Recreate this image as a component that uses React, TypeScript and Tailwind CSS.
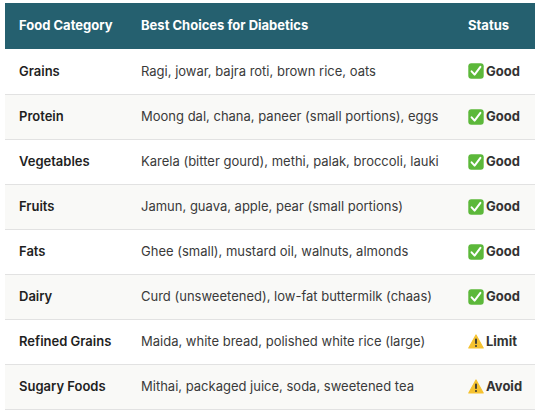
const rows: { cat: string; choices: string; status: "good" | "limit" | "avoid" }[] = [
  { cat: "Grains", choices: "Ragi, jowar, bajra roti, brown rice, oats", status: "good" },
  { cat: "Protein", choices: "Moong dal, chana, paneer (small portions), eggs", status: "good" },
  { cat: "Vegetables", choices: "Karela (bitter gourd), methi, palak, broccoli, lauki", status: "good" },
  { cat: "Fruits", choices: "Jamun, guava, apple, pear (small portions)", status: "good" },
  { cat: "Fats", choices: "Ghee (small), mustard oil, walnuts, almonds", status: "good" },
  { cat: "Dairy", choices: "Curd (unsweetened), low-fat buttermilk (chaas)", status: "good" },
  { cat: "Refined Grains", choices: "Maida, white bread, polished white rice (large)", status: "limit" },
  { cat: "Sugary Foods", choices: "Mithai, packaged juice, soda, sweetened tea", status: "avoid" },
];

function CheckIcon() {
  return (
    <svg width="16" height="16" viewBox="0 0 16 16" className="shrink-0">
      <rect x="0.3" y="0.3" width="15.4" height="15.4" rx="3" fill="#5cb83a" />
      <path d="M3.6 8.3 L6.6 11.6 L12.4 3.8" stroke="#fff" strokeWidth="2" fill="none" strokeLinecap="round" strokeLinejoin="round" />
    </svg>
  );
}

function WarnIcon() {
  return (
    <svg width="16" height="15" viewBox="0 0 16 15" className="shrink-0">
      <path d="M8 1 L15.2 14 L0.8 14 Z" fill="#f5c230" stroke="#f5c230" strokeWidth="1.2" strokeLinejoin="round" />
      <rect x="7.1" y="4.6" width="1.8" height="5.4" rx="0.8" fill="#333" />
      <circle cx="8" cy="12" r="1" fill="#333" />
    </svg>
  );
}

export default function App() {
  return (
    <div className="min-h-[410px] bg-white pl-[5px] pt-[3px]" style={{ fontFamily: "Inter, 'Noto Sans', sans-serif" }}>
      <table className="w-[540px] border-collapse text-[13px]">
        <thead>
          <tr className="h-[46px] bg-[#25606f] text-left text-white">
            <th className="w-[122px] px-[14px] font-bold">Food Category</th>
            <th className="w-[327px] px-[14px] font-bold">Best Choices for Diabetics</th>
            <th className="px-[14px] font-bold">Status</th>
          </tr>
        </thead>
        <tbody>
          {rows.map((r, i) => (
            <tr key={r.cat} className={`h-[45px] border-b border-[#e2e2e2] ${i % 2 === 1 ? "bg-[#f9f9f7]" : "bg-white"}`}>
              <td className="px-[14px] font-semibold text-[#1f1f1f]">{r.cat}</td>
              <td className="px-[14px] text-[#3a3a3a]">{r.choices}</td>
              <td className="px-[14px]">
                <div className="flex items-center gap-[2px] font-bold text-[#333]">
                  {r.status === "good" ? <CheckIcon /> : <WarnIcon />}
                  <span>{r.status === "good" ? "Good" : r.status === "limit" ? "Limit" : "Avoid"}</span>
                </div>
              </td>
            </tr>
          ))}
        </tbody>
      </table>
    </div>
  );
}
